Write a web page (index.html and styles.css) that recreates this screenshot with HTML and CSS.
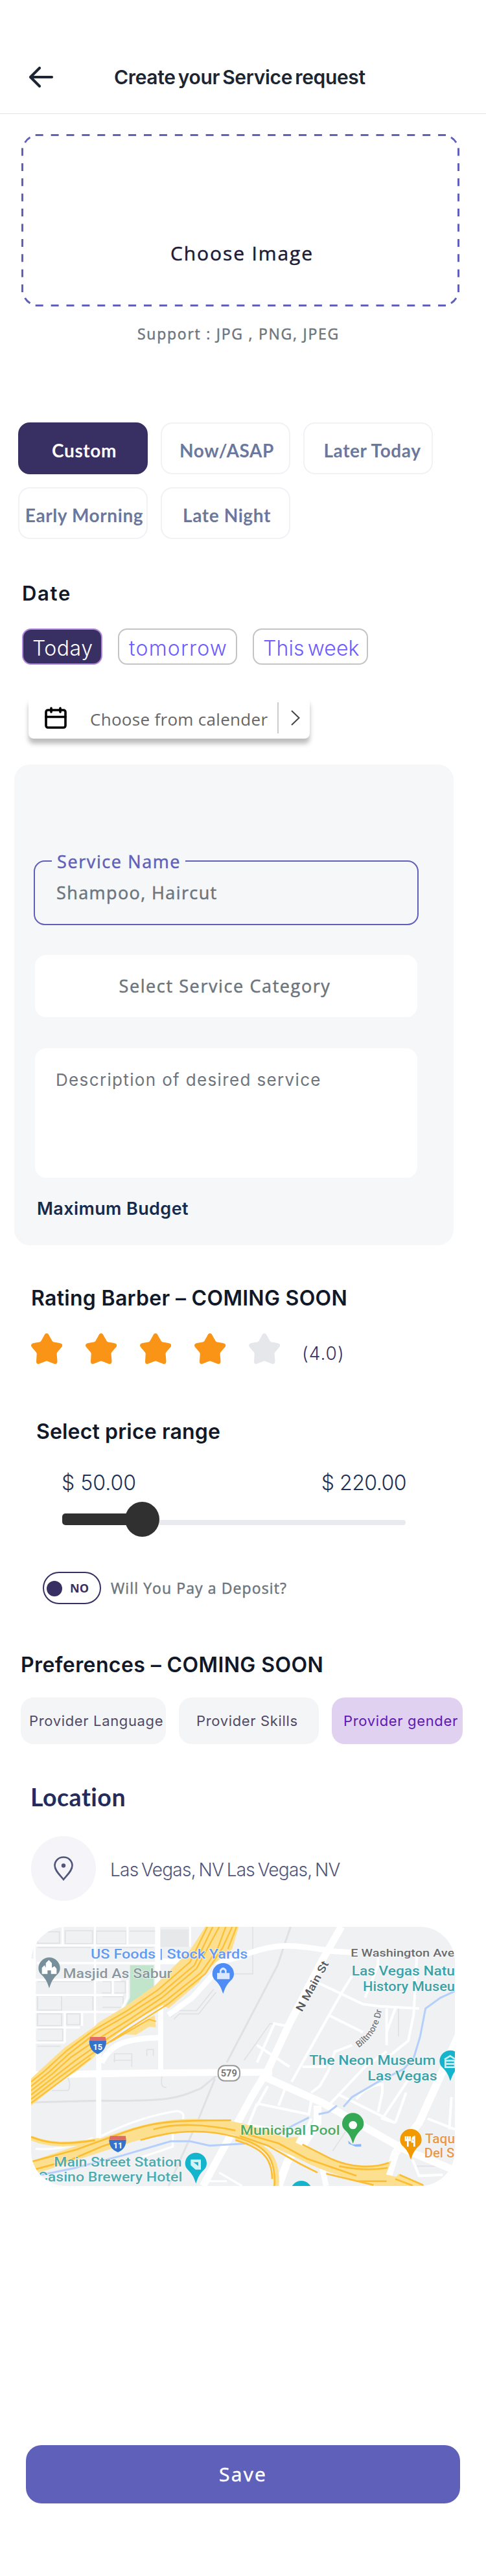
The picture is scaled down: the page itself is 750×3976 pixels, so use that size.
FILE: index.html
```html
<!DOCTYPE html>
<html lang="en">
<head>
<meta charset="utf-8">
<title>Create your Service request</title>
<link rel="stylesheet" href="styles.css">
</head>
<body>
<svg class="defs" width="0" height="0">
  <defs>
    <path id="star" d="M24 0C26 0 27 1.500 28.200 4L32.500 11.500C33 12.700 34 13.300 35.300 13.500L44 15C49 16 49.500 19 46.500 22L40.500 29C39.700 30 39.500 31 39.600 32L40.500 43C40.500 47 38 48 35 46.700L26 43.200C24.500 42.600 23.500 42.600 22 43.200L13 46.700C10 48 8 47 8 43.500L8.700 32C8.700 31 8.500 30 7.700 29L1.700 22C-1 19 -.5 16 4 15L12.700 13.500C14 13.300 15 12.700 15.600 11.500L19.800 4C21 1.500 22 0 24 0Z"/>
  </defs>
</svg>

<header class="topbar">
  <svg class="back" width="40" height="34" viewBox="0 0 40 34" fill="none" stroke="#1c2632" stroke-width="4.200" stroke-linecap="round" stroke-linejoin="round"><path d="M36 17H4M17 3L3 17L17 31"/></svg>
  <h1 class="title">Create your Service request</h1>
</header>

<section class="upload">
  <svg class="dashes" width="679" height="268" viewBox="0 0 679 268" fill="none" stroke="#605fb9" stroke-width="3">
    <path stroke-dasharray="12 11.900" d="M22.700 2.500H656M22.700 265.500H656"/>
    <path stroke-dasharray="12 11.400" d="M2.500 22.500V246M675.500 22.500V246"/>
    <path d="M6.500 14Q9.500 9 14.500 6M672 14Q669 9 664 6M6.500 254Q9.500 259 14.500 262M672 254Q669 259 664 262"/>
  </svg>
  <span class="upload-text">Choose Image</span>
</section>
<p class="support">Support : JPG , PNG, JPEG</p>

<section class="times">
  <div class="time active">Custom</div>
  <div class="time">Now/ASAP</div>
  <div class="time shifted">Later Today</div>
  <div class="time">Early Morning</div>
  <div class="time">Late Night</div>
</section>

<h2 class="date-title">Date</h2>
<section class="days">
  <div class="day today">Today</div>
  <div class="day tomorrow">tomorrow</div>
  <div class="day week">This week</div>
</section>
<div class="calendar">
  <svg width="34" height="34" viewBox="0 0 34 34" fill="none" stroke="#000" stroke-width="3.600" stroke-linecap="round" stroke-linejoin="round"><rect x="2" y="5" width="30" height="27" rx="3"/><path d="M2 15.500H32M10 2V8M24 2V8"/></svg>
  <span class="calendar-text">Choose from calender</span>
  <i class="divider"></i>
  <svg width="14" height="24" viewBox="0 0 14 24" fill="none" stroke="#444" stroke-width="2"><path d="M1 1L12.500 12L1 23"/></svg>
</div>

<section class="panel">
  <div class="field named"><label class="field-label">Service Name</label>Shampoo, Haircut</div>
  <div class="field category">Select Service Category</div>
  <div class="field description">Description of desired service</div>
  <h3 class="budget">Maximum Budget</h3>
</section>

<h2 class="rating-title">Rating Barber – COMING SOON</h2>
<section class="rating">
  <svg class="star" viewBox="0 0 48 48"><use href="#star"/></svg>
  <svg class="star" viewBox="0 0 48 48"><use href="#star"/></svg>
  <svg class="star" viewBox="0 0 48 48"><use href="#star"/></svg>
  <svg class="star" viewBox="0 0 48 48"><use href="#star"/></svg>
  <svg class="star off" viewBox="0 0 48 48"><use href="#star"/></svg>
  <span class="score">(4.0)</span>
</section>

<h2 class="price-title">Select price range</h2>
<div class="prices"><span>$ 50.00</span><span class="max">$ 220.00</span></div>
<div class="slider"><i class="fill"></i><i class="knob"></i><i class="track"></i></div>

<div class="deposit">
  <div class="toggle"><i class="dot"></i>NO</div>
  <span class="deposit-text">Will You Pay a Deposit?</span>
</div>

<h2 class="pref-title">Preferences – COMING SOON</h2>
<section class="prefs">
  <div class="pref language">Provider Language</div>
  <div class="pref skills">Provider Skills</div>
  <div class="pref gender">Provider gender</div>
</section>

<h2 class="loc-title">Location</h2>
<div class="place">
  <div class="place-icon"><svg width="30" height="38" viewBox="0 0 30 38" fill="none" stroke="#50557a" stroke-width="2.600"><path d="M15 36C9 28.500 1.500 22 1.500 14.500C1.500 7 7.500 1.500 15 1.500S28.500 7 28.500 14.500C28.500 22 21 28.500 15 36Z"/><circle cx="15" cy="14.500" r="3.200" fill="#50557a" stroke="none"/></svg></div>
  <span class="place-text">Las Vegas, NV Las Vegas, NV</span>
</div>

<div class="map">
<svg width="654" height="400" viewBox="54 72 1962 1200">
  <defs>
    <path id="pin" d="M0 142C-8 120 -12 105 -32 84C-44 74 -50 64 -50 50A50 50 0 0 1 50 50C50 64 44 74 32 84C12 105 8 120 0 142Z"/>
  </defs>
  <rect x="54" y="72" width="1962" height="1200" fill="#f0f1f3"/>
  <path fill="#e7e8ea" d="M652 84H785V165H652Z"/>
  <path fill="#c1e5cb" d="M512 250H622V350L492 440L512 400Z"/>
  <g fill="none" stroke="#e0e1e5" stroke-width="5">
    <path d="M84 95H185V148H84ZM212 90H338V150H212ZM356 92H495V152H356ZM510 92H630M84 168H330M370 168H620M84 325H340M84 392H195V458H84ZM215 392H340V458M84 475H195V530H84ZM220 475H280V525H220ZM84 545H200V600H84M385 325H425V378H380M440 325H490V378H440M385 395H480V445H385M84 625H190"/>
    <path d="M440 700V660H520V720M590 670V640H620V670M435 690H515M150 830H225Q240 810 225 770M660 765Q650 820 680 815M700 490L735 460H820L900 360M715 500L740 475H830L910 375M960 290H1060M1080 72V290H1020"/>
    <path stroke-width="9" d="M54 885L380 877C720 882 740 860 840 820L920 755M1255 72L1195 250L960 700M905 775L830 960L690 1272"/>
    <path d="M1040 690L1160 520L1200 525M1450 1110L1510 1020M1840 1180H1940M1700 450V600M1755 440V580"/>
  </g>
  <g fill="none" stroke="#fff" stroke-width="10">
    <path d="M200 72V160M350 72V560M500 72V160M640 158H75M80 240H640M75 318H470M75 388H480M75 466H480M75 538H280M75 608H210M210 466V608M290 466V530M432 318V385M500 318V400L470 460M790 72V165M70 160V740"/>
    <path d="M380 1040Q560 950 730 925Q770 930 755 970M75 1100Q200 1110 340 1050M710 1030V1090L560 1140M925 1210L1030 1272M880 1250H960"/>
    <path stroke-width="12" d="M1380 330L1590 430L1670 440L1850 450M1490 380L1260 790M1430 480L1590 560M1540 300L1490 380M1600 400L1660 250V200M1840 200L1825 480L1800 600L1700 680M1700 450V620M1740 450L1700 560"/>
    <path stroke-width="12" d="M1540 620L1460 650L1430 740L1390 810L1350 840M1100 700L1180 520L1230 530M1100 620L1250 720M1310 720H1420M1440 890L1600 720L1700 650M1480 850L1740 980L1680 960L1800 780M1560 870Q1600 810 1680 800V840L1660 930M1740 980L1790 840M1100 890L1340 940L1350 880M1100 890L1060 990L1320 1030L1350 960M1150 810L1100 900M1230 820L1200 900M1890 960L2016 1010M1820 1150L1850 1225L1960 1220M2000 860L1990 1010"/>
    <g stroke="#fff">
      <path stroke-width="32" d="M54 757L640 748L1170 745"/>
      <path stroke-width="34" d="M1130 765L1400 885L1740 1080L1800 1110L2016 1200"/>
      <path stroke-width="24" d="M640 72V400M654 430V740M367 560V1065M64 220V760"/>
      <path stroke-width="26" d="M640 232H740C860 230 950 245 1060 195C1200 145 1260 155 1450 185L1560 192M380 700C420 620 480 590 650 585M690 480L800 400L900 290"/>
      <path stroke-width="34" d="M1490 72L1400 230L1250 520L1150 735L1080 850L1020 960L850 1272"/>
      <path stroke-width="36" d="M2040 560L1950 760L1850 980L1740 1120L1700 1250M1320 1040L1240 1160L1200 1272M1380 900V980L1300 1100"/>
      <path stroke-width="26" d="M1320 1110L1400 1180L1420 1272"/>
    </g>
  </g>
  <g fill="none" stroke="#b4cffb" stroke-width="9">
    <path d="M2016 370L1950 400L1880 450L1855 580L1825 680L1780 730L1660 790L1540 860L1500 905M1470 900L1430 930L1385 940M1340 955L1270 990L1160 1050M54 1230L250 1190L480 1130L700 1065H790L880 1085L1060 1075"/>
  </g>
  <path fill="#fde08f" d="M860 72H1015L985 175L870 270L830 330L690 450L665 435L540 500L400 610L340 680L265 740L210 775L54 900V775L90 740L210 630L345 535L365 515L490 440L625 345L700 270L790 180Z"/>
  <path fill="#fde08f" d="M480 570L625 480L632 538L600 535L540 572Z"/>
  <g fill="none" stroke="#fbc038" stroke-width="7">
    <path d="M54 790L110 745L220 645L345 550L500 460L640 365L790 235L870 72"/>
    <path d="M54 810L130 750L230 660L345 570L500 480L650 385L810 250L895 72"/>
    <path d="M54 830L150 755L240 675L350 600L510 500L660 400L820 265L925 72"/>
    <path d="M54 850L170 760L260 690L360 620L520 515L680 412L840 285L915 180L955 72"/>
    <path d="M54 870L190 765L280 700L370 635L530 530L690 428L860 290L940 170L985 72"/>
    <path d="M54 888L210 772L330 680M420 605L600 500L632 510M965 175L1005 72"/>
  </g>
  <path fill="none" stroke="#fde08f" stroke-width="62" d="M54 1190L230 1130L480 1050C680 980 820 985 990 1005C1110 1030 1200 1065 1350 1140C1460 1190 1620 1240 1820 1275"/>
  <path fill="#fde08f" d="M1180 1050L1290 1045L1270 1090ZM1480 1160C1580 1190 1650 1185 1722 1155L1695 1225L1540 1215ZM1755 1215L1880 1272H1720Z"/>
  <path fill="none" stroke="#fde08f" stroke-width="22" d="M54 1050C140 1085 220 1085 370 1060M1000 1045C1140 1080 1200 1130 1190 1272"/>
  <g fill="none" stroke="#fbbd33" stroke-width="8">
    <path d="M54 1160L260 1105L480 1025C620 975 700 968 980 968"/>
    <path d="M54 1200L240 1150L380 1090L480 1055M54 1045C140 1080 220 1080 350 1060M620 1010C720 980 860 985 1000 1015"/>
    <path d="M560 1060C720 1010 870 1010 1000 1045C1130 1080 1190 1130 1180 1272M1000 1060C1120 1095 1170 1140 1170 1240"/>
    <path d="M1020 1040L1150 1085L1300 1170L1380 1210M1030 1025L1200 1075L1330 1145L1560 1225M1310 1080L1440 1145C1540 1190 1640 1190 1710 1165M1480 1180Q1600 1205 1705 1188M1420 1215L1640 1268M1760 1220L1870 1268M1740 1240L1820 1270M1560 1250H1700"/>
  </g>
  <g font-family="Roboto, sans-serif" font-weight="500" paint-order="stroke" stroke="#fff" stroke-width="5" stroke-opacity=".7">
    <text x="330" y="218" font-size="61" fill="#6399f3" textLength="727" lengthAdjust="spacingAndGlyphs">US Foods | Stock Yards</text>
    <text x="202" y="310" font-size="59" fill="#8a979f" textLength="505" lengthAdjust="spacingAndGlyphs">Masjid As Sabur</text>
    <text x="160" y="1182" font-size="60" fill="#4faaae" textLength="592" lengthAdjust="spacingAndGlyphs">Main Street Station</text>
    <text x="86" y="1250" font-size="60" fill="#4faaae" textLength="668" lengthAdjust="spacingAndGlyphs">Casino Brewery Hotel</text>
    <text x="1022" y="1035" font-size="62" fill="#4fab68" textLength="462" lengthAdjust="spacingAndGlyphs">Municipal Pool</text>
    <text x="1342" y="710" font-size="62" fill="#3aa2a8" textLength="585" lengthAdjust="spacingAndGlyphs">The Neon Museum</text>
    <text x="1612" y="782" font-size="62" fill="#3aa2a8" textLength="322" lengthAdjust="spacingAndGlyphs">Las Vegas</text>
    <text x="1538" y="298" font-size="62" fill="#3aa2a8" textLength="478" lengthAdjust="spacingAndGlyphs">Las Vegas Natu</text>
    <text x="1590" y="370" font-size="62" fill="#3aa2a8" textLength="426" lengthAdjust="spacingAndGlyphs">History Museu</text>
    <text x="1534" y="210" font-size="52" fill="#6a6c70" textLength="480" lengthAdjust="spacingAndGlyphs">E Washington Ave</text>
    <text x="1878" y="1074" font-size="60" fill="#e8984c" textLength="138" lengthAdjust="spacingAndGlyphs">Taqu</text>
    <text x="1874" y="1140" font-size="60" fill="#e8984c" textLength="140" lengthAdjust="spacingAndGlyphs">Del S</text>
    <text transform="translate(1308 468) rotate(-61)" font-size="50" fill="#55585c" textLength="258" lengthAdjust="spacingAndGlyphs">N Main St</text>
    <path id="bilt" d="M1570 632Q1680 560 1682 400" fill="none" stroke="none"/>
    <text font-size="42" fill="#77797d"><textPath href="#bilt">Biltmore Dr</textPath></text>
  </g>
  <g>
    <use href="#pin" x="138" y="214" fill="#78909c"/><path fill="#fff" d="M104 290V262L116 250L122 262V240L136 226L150 240V262L162 254L172 266V290H146V274H130V290Z"/>
    <use href="#pin" x="943" y="240" fill="#4e8df6"/><path fill="#dce8fe" d="M915 314V286H927V272Q943 248 959 272V286H973V314ZM935 286H951V276Q943 266 935 276Z"/>
    <use href="#pin" x="817" y="1118" fill="#14b5cc"/><path fill="#d4f3f6" d="M793 1150H840V1196H815L793 1176Z"/><path fill="#14b5cc" d="M806 1162H828V1180Z"/>
    <use href="#pin" x="1995" y="644" fill="#14b5cc"/><path fill="none" stroke="#c7eff4" stroke-width="8" d="M1968 686L1994 670L2016 684M1972 692H2016V722H1972ZM1972 707H2016"/>
    <use href="#pin" x="1544" y="934" fill="#34a853"/><circle cx="1544" cy="990" r="19" fill="#fff"/>
    <use href="#pin" x="1812" y="1008" fill="#f29900"/><path fill="none" stroke="#fff" stroke-width="8" d="M1788 1042V1060H1808V1042M1798 1042V1090M1828 1090V1044Q1816 1048 1818 1068H1828"/>
    <use href="#pin" x="1305" y="1248" fill="#14b5cc"/>
    <path fill="#8bb4f8" d="M1522 1062L1540 1080L1582 1078V1090H1556L1524 1076Z"/>
  </g>
  <g font-family="Roboto, sans-serif" font-weight="700" fill="#fff" text-anchor="middle">
    <path fill="#3573cb" d="M323 600H402Q402 645 362 662Q323 645 323 600Z"/><path fill="#df6b68" d="M328 582H398L402 600H323Z"/><text x="362" y="641" font-size="38">15</text>
    <path fill="#3573cb" d="M415 1058H494Q494 1100 456 1116Q415 1100 415 1058Z"/><path fill="#df6b68" d="M420 1040H492L494 1058H415Z"/><text x="456" y="1098" font-size="38">11</text>
    <rect x="920" y="715" width="100" height="70" rx="30" fill="#fff" stroke="#999" stroke-width="6"/><text x="970" y="766" font-size="44" fill="#777">579</text>
  </g>
</svg>
</div>

<button class="save">Save</button>
</body>
</html>
```
FILE: styles.css
```css
* { box-sizing: border-box; }
body { margin: 0; width: 750px; height: 3976px; background: #fff; overflow-x: hidden; font-family: Inter, sans-serif; }
h1, h2, h3, p { margin: 0; }
svg { display: block; flex: none; }
i { display: block; }
.defs { display: none; }
.topbar { display: flex; align-items: center; height: 176px; padding: 62px 0 0 44px; border-bottom: 1px solid #e2e2e2; }
.title { margin-left: 92px; font-size: 30px; font-weight: 600; letter-spacing: -.35px; word-spacing: -3px; line-height: 40px; color: #1c2632; white-space: nowrap; }
.upload { display: grid; width: 679px; height: 268px; margin: 30px 0 0 32px; }
.dashes, .upload-text { grid-area: 1 / 1; }
.upload-text { padding-top: 165px; text-align: center; font: 500 30px/40px "Open Sans", sans-serif; letter-spacing: 1.9px; text-indent: 4px; color: #1e1b34; }
.upload-text, .support, .field, .deposit-text, .save { -webkit-text-stroke: .5px currentColor; }
.support { width: 736px; margin-top: 26px; text-align: center; font: 500 23px/30px "Open Sans", sans-serif; letter-spacing: 1.75px; color: #6c757d; }
.times { display: grid; grid-template-columns: repeat(3, 200px); grid-auto-rows: 80px; gap: 20px; margin: 122px 0 0 28px; }
.time { display: flex; align-items: center; justify-content: center; padding: 6px 0 0 4px; border: 2px solid #f1f1f6; border-radius: 18px; font: 700 28px/36px Lato, sans-serif; letter-spacing: .6px; color: #6b789e; white-space: nowrap; }
.time.shifted { padding-left: 13px; }
.time.active { border-color: #383062; background: #383062; color: #fff; }
.date-title { margin: 64px 0 0 34px; font-size: 31px; line-height: 40px; font-weight: 600; letter-spacing: 1.7px; color: #111827; }
.days { display: flex; margin: 34px 0 0 34px; }
.day { display: flex; align-items: center; height: 56px; padding: 4px 0 0 14px; border: 2px solid #c4c4c4; border-radius: 14px; font-size: 32px; font-weight: 300; color: #6c5cff; white-space: nowrap; }
.today { width: 124px; border-color: #b388dc; background: #383062; color: #fff; letter-spacing: .5px; }
.tomorrow { width: 184px; margin-left: 24px; padding-left: 15px; letter-spacing: 1.2px; }
.week { width: 178px; margin-left: 24px; letter-spacing: .1px; word-spacing: -4px; }
.calendar { display: flex; align-items: center; width: 434px; height: 64px; margin: 50px 0 0 44px; padding-left: 25px; border-radius: 8px; background: #fff; box-shadow: 0 8px 7px rgba(0, 0, 0, .26); }
.calendar-text { width: 288px; margin: 3px 0 0 36px; font: 400 26px/36px "Open Sans", sans-serif; letter-spacing: .3px; color: #666; white-space: nowrap; }
.divider { width: 2px; height: 48px; margin: 0 19px 0 1px; background: #ccc; }
.panel { width: 678px; height: 742px; margin: 40px 0 0 22px; padding: 148px 0 0 30px; border-radius: 24px; background: #f5f7f9; }
.field { width: 590px; margin-left: 2px; border-radius: 17px; background: #fff; font: 500 27px/40px "Open Sans", sans-serif; color: #6c757d; letter-spacing: 1.4px; }
.named { position: relative; width: 594px; height: 100px; margin-left: 0; padding: 28px 0 0 33px; border: 2px solid #605fb9; background: none; }
.field-label { position: absolute; left: 26px; top: -18px; width: 206px; height: 36px; padding-left: 8px; background: #f5f7f9; color: #605fb9; line-height: 36px; letter-spacing: 1.6px; }
.category { height: 96px; margin-top: 46px; padding: 28px 4px 0 0; text-align: center; letter-spacing: 1.6px; }
.description { height: 200px; margin-top: 48px; padding: 29px 0 0 32px; font: 400 26px/40px Inter, sans-serif; letter-spacing: 1.35px; -webkit-text-stroke: 0; }
.budget { margin: 28px 0 0 5px; font-size: 27px; line-height: 40px; font-weight: 600; letter-spacing: .4px; color: #172b4d; }
.rating-title, .price-title, .pref-title { font-size: 32px; font-weight: 600; line-height: 40px; color: #111827; }
.rating-title { margin: 62px 0 0 48px; letter-spacing: .3px; }
.rating { display: flex; align-items: flex-start; gap: 36px; height: 48px; margin: 34px 0 0 48px; }
.star { width: 48px; height: 48px; fill: #f99417; }
.star.off { fill: #e5e7eb; }
.score { margin-top: 11px; margin-left: -2px; font-size: 28px; line-height: 40px; font-weight: 300; letter-spacing: 1px; color: #383062; }
.price-title { margin: 84px 0 0 56px; letter-spacing: .15px; }
.prices { display: flex; justify-content: space-between; width: 532px; margin: 39px 0 0 95px; font-size: 32px; font-weight: 300; line-height: 40px; color: #1c2f55; }
.max { letter-spacing: -.5px; }
.slider { display: flex; align-items: center; width: 530px; height: 54px; margin: 9px 0 0 96px; }
.fill { width: 108px; height: 18px; border-radius: 5px 0 0 5px; background: #303030; }
.knob { position: relative; z-index: 1; flex: none; width: 53px; height: 54px; margin: 0 -10px 0 -11px; border-radius: 50%; background: #303030; }
.track { flex: 1; height: 8px; margin-top: 10px; border-radius: 0 4px 4px 0; background: #e9eaef; }
.deposit { display: flex; align-items: center; height: 50px; margin: 54px 0 0 66px; }
.toggle { display: flex; align-items: center; gap: 12px; width: 90px; height: 50px; padding-left: 4px; border: 2px solid #383062; border-radius: 25px; font: 700 18px/24px "Open Sans", sans-serif; color: #383062; }
.dot { width: 24px; height: 24px; margin-top: 2px; border-radius: 50%; background: #383062; }
.deposit-text { margin-left: 15px; font: 500 23px/30px "Open Sans", sans-serif; letter-spacing: 1.1px; color: #6c757d; white-space: nowrap; }
.pref-title { margin: 74px 0 0 32px; letter-spacing: .4px; }
.prefs { display: flex; margin: 30px 0 0 32px; }
.pref { display: flex; align-items: center; height: 72px; border-radius: 20px; background: #f4f5f7; font-size: 22px; color: #4f4a68; letter-spacing: .65px; white-space: nowrap; }
.language { width: 224px; padding-left: 13px; }
.skills { width: 216px; margin-left: 20px; padding-left: 27px; }
.gender { width: 202px; margin-left: 20px; padding-left: 18px; background: #e1d1f0; color: #5f17b5; }
.loc-title { margin: 62px 0 0 47px; font: 700 37.500px/40px Lato, sans-serif; letter-spacing: .5px; color: #262b5e; }
.place { display: flex; align-items: center; height: 100px; margin: 40px 0 0 48px; }
.place-icon { display: flex; align-items: center; justify-content: center; width: 100px; height: 100px; border-radius: 50%; background: #f4f4f9; }
.place-text { margin: 4px 0 0 22px; font-size: 28px; font-weight: 300; letter-spacing: -.75px; word-spacing: -2.500px; color: #50557a; white-space: nowrap; }
.map { width: 654px; height: 400px; margin: 40px 0 0 48px; overflow: hidden; border-radius: 54px; }
.save { display: block; width: 670px; height: 90px; margin: 400px 0 0 40px; padding: 0 0 1px; border: 0; border-radius: 24px; background: #5f60b9; color: #fff; font: 500 30px/40px "Open Sans", sans-serif; letter-spacing: 2.300px; }
```
